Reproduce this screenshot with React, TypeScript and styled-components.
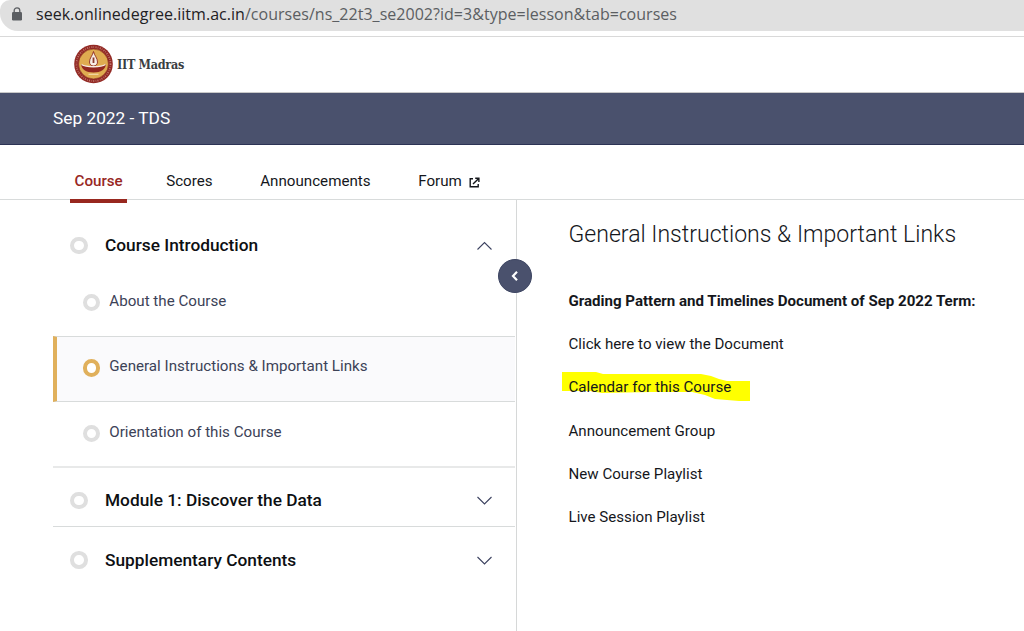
import React from 'react';
import styled, { createGlobalStyle } from 'styled-components';

const Global = createGlobalStyle`
  * { box-sizing: border-box; }
  body { margin: 0; background: #fff; overflow: hidden; font-family: Roboto, "Liberation Sans", sans-serif; }
`;

const Page = styled.div`
  width: 1024px;
  height: 631px;
  display: flex;
  flex-direction: column;
  overflow: hidden;
`;

const BrowserBar = styled.div`
  height: 37px;
  flex: none;
  border-bottom: 1px solid #d9d9d9;
`;

const AddressField = styled.div`
  height: 31px;
  background: #e0e0e0;
  border-radius: 10px 0 0 18px;
  display: flex;
  align-items: center;
  padding: 0 0 3px 11px;
  gap: 13px;
`;

const Url = styled.span`
  font: 400 16px/24px "Open Sans", "Noto Sans", sans-serif;
  letter-spacing: 0.03px;
  color: #5b5e62;
  white-space: nowrap;
  b { font-weight: 400; color: #1f2124; }
`;

const Header = styled.header`
  height: 56px;
  flex: none;
  display: flex;
  align-items: center;
  padding: 0 0 1px 74px;
  gap: 4px;
  border-bottom: 1px solid #c9c9c9;
`;

const Brand = styled.span`
  font: 700 12.5px/20px "DejaVu Serif Condensed", "DejaVu Serif", serif;
  letter-spacing: -0.3px;
  color: #3a3d42;
  white-space: nowrap;
  padding-top: 2px;
`;

const TitleBar = styled.div`
  height: 52px;
  flex: none;
  background: #4a516d;
  border-bottom: 1px solid #2c3354;
  color: #fff;
  padding-left: 53px;
  font-size: 17.3px;
  line-height: 50px;
`;

const Tabs = styled.nav`
  height: 55px;
  flex: none;
  display: flex;
  padding-left: 70px;
  border-bottom: 1px solid #d8dbdb;
`;

const Tab = styled.a<{ $active?: boolean; $gap: number }>`
  height: 58px;
  padding: 18px 4px 0 4.5px;
  margin-right: ${p => p.$gap}px;
  display: flex;
  gap: 7px;
  font-size: 15.15px;
  line-height: 37px;
  font-weight: ${p => (p.$active ? 500 : 400)};
  color: ${p => (p.$active ? '#98281f' : '#15171c')};
  border-bottom: ${p => (p.$active ? '4px solid #98281f' : 'none')};
  white-space: nowrap;
  svg { margin-top: 14px; }
`;

const Body = styled.main`
  flex: 1;
  display: flex;
`;

const Sidebar = styled.aside`
  width: 517px;
  flex: none;
  padding: 0 1px 0 53px;
  border-right: 1px solid #d6d8d8;
  position: relative;
`;

const ModuleRow = styled.div<{ $h: number; $top: number; $line?: boolean }>`
  height: ${p => p.$h}px;
  padding: ${p => p.$top}px 23px 0 17px;
  display: flex;
  align-items: flex-start;
  border-bottom: ${p => (p.$line ? '1px solid #d8dbdb' : 'none')};
  svg { margin-top: 8px; }
`;

const ModuleName = styled.span`
  flex: 1;
  margin-left: 17.5px;
  font-size: 17.3px;
  line-height: 24px;
  font-weight: 500;
  color: #0d0f12;
`;

const LessonRow = styled.div<{ $active?: boolean; $last?: boolean }>`
  height: 66px;
  display: flex;
  align-items: center;
  padding: 0 0 ${p => (p.$active ? 6 : 5)}px ${p => (p.$active ? 25.5 : 29.5)}px;
  gap: 9.3px;
  background: ${p => (p.$active ? '#fafafc' : '#fff')};
  border: solid #d8dbdb;
  border-width: ${p => (p.$active ? '1px 0' : '0')};
  border-left: ${p => (p.$active ? '4px solid #e0b05c' : 'none')};
  border-bottom: ${p => (p.$last ? '2px solid #e8e9e9' : '')};
`;

const LessonName = styled.span`
  font-size: 15.15px;
  line-height: 22px;
  color: #3c4257;
`;

const Ring = styled.span<{ $active?: boolean }>`
  width: 17.5px;
  height: 17.5px;
  flex: none;
  margin-top: 3.5px;
  border-radius: 50%;
  background: #fff;
  border: 4px solid ${p => (p.$active ? '#e0b05c' : '#dfdfdf')};
`;

const Collapse = styled.button`
  position: absolute;
  left: 498px;
  top: 59px;
  width: 34px;
  height: 34px;
  padding: 0 1px 1px 0;
  border: 1px solid #3d4562;
  border-radius: 50%;
  background: #4a516d;
  display: flex;
  align-items: center;
  justify-content: center;
`;

const Content = styled.section`
  flex: 1;
  padding: 18px 0 0 51.5px;
`;

const Heading = styled.h1`
  margin: 0 0 37px;
  font-size: 23.07px;
  line-height: 33px;
  font-weight: 300;
  color: #15171c;
  white-space: nowrap;
`;

const Para = styled.p<{ $bold?: boolean }>`
  margin: 0 0 19.2px;
  height: 24px;
  font-size: 15.1px;
  line-height: 26px;
  font-weight: ${p => (p.$bold ? 700 : 400)};
  letter-spacing: ${p => (p.$bold ? '-0.02px' : '0.01px')};
  color: #15171c;
  white-space: nowrap;
`;

const Marked = styled.span`
  position: relative;
  isolation: isolate;
  svg { position: absolute; z-index: -1; left: -7px; top: -7px; }
`;

const Lock = () => (
  <svg width="12" height="14" viewBox="0 0 12 14">
    <rect x="1" y="5" width="10" height="8.5" rx="1.2" fill="#5b5e62" />
    <path d="M3.2 6V3.6a2.8 2.8 0 0 1 5.6 0V6" fill="none" stroke="#5b5e62" strokeWidth="1.3" />
  </svg>
);

const Crest = () => (
  <svg width="39" height="40" viewBox="0 0 39 40">
    <circle cx="19.5" cy="20" r="19.3" fill="#932a25" />
    <circle cx="19.5" cy="20" r="17" fill="none" stroke="#c07a70" strokeWidth="1.8" strokeDasharray="1 1.2 .6 1.5" />
    <circle cx="19.5" cy="20" r="14.9" fill="#dfab50" stroke="#7d221d" strokeWidth=".5" />
    <path d="M19.5 7.5c.8 4 4 6.500 4 10.500 0 2.500-1.800 4-4 4s-4-1.500-4-4c0-4 3.200-6.500 4-10.500z" fill="#f8efe6" stroke="#8d2922" strokeWidth=".9" />
    <path d="M19.5 13.500v5.500" stroke="#8d3b30" strokeWidth="1.800" />
    <path d="M7 20c2.500 2 7.500 2.600 12.500 2.600S29.500 22 32 20c-.3 5-5 8.500-12.500 8.500S7.300 25 7 20z" fill="#922720" />
    <path d="M7.500 20.500c4.500 3 19.500 3 24 0" fill="none" stroke="#f8ece2" strokeWidth="1.300" />
    <path d="M14.500 30.300h10" stroke="#f3d9a8" strokeWidth="1.200" />
  </svg>
);

const External = () => (
  <svg width="11" height="11" viewBox="0 0 11 11" fill="none" stroke="#15171c" strokeWidth="1.4">
    <path d="M4 1.700H1.200v8.100h8V7" />
    <path d="M6.200 1.200h3.700v3.700M9.700 1.400L4 7" />
  </svg>
);

const Chevron = ({ up }: { up?: boolean }) => (
  <svg width="15" height="10" viewBox="0 0 15 10" fill="none" stroke="#3c4260" strokeWidth="1.1">
    <path d={up ? 'M.5 8.500l7-7 7 7' : 'M.5 1l7 7 7-7'} />
  </svg>
);

export default function App() {
  return (
    <>
      <Global />
      <Page>
        <BrowserBar>
          <AddressField>
            <Lock />
            <Url><b>seek.onlinedegree.iitm.ac.in</b>/courses/ns_22t3_se2002?id=3&amp;type=lesson&amp;tab=courses</Url>
          </AddressField>
        </BrowserBar>
        <Header>
          <Crest />
          <Brand>IIT Madras</Brand>
        </Header>
        <TitleBar>Sep 2022 - TDS</TitleBar>
        <Tabs>
          <Tab $active $gap={35}>Course</Tab>
          <Tab $gap={39.2}>Scores</Tab>
          <Tab $gap={39.2}>Announcements</Tab>
          <Tab $gap={0}>Forum <External /></Tab>
        </Tabs>
        <Body>
          <Sidebar>
            <ModuleRow $h={70} $top={33}><Ring /><ModuleName>Course Introduction</ModuleName><Chevron up /></ModuleRow>
            <LessonRow><Ring /><LessonName>About the Course</LessonName></LessonRow>
            <LessonRow $active><Ring $active /><LessonName>General Instructions &amp; Important Links</LessonName></LessonRow>
            <LessonRow $last><Ring /><LessonName>Orientation of this Course</LessonName></LessonRow>
            <ModuleRow $h={59} $top={20} $line><Ring /><ModuleName>Module 1: Discover the Data</ModuleName><Chevron /></ModuleRow>
            <ModuleRow $h={70} $top={20.5}><Ring /><ModuleName>Supplementary Contents</ModuleName><Chevron /></ModuleRow>
            <Collapse>
              <svg width="8" height="10" viewBox="0 0 8 10" fill="none" stroke="#fff" strokeWidth="2.2"><path d="M6 .8L2 5l4 4.200" /></svg>
            </Collapse>
          </Sidebar>
          <Content>
            <Heading>General Instructions &amp; Important Links</Heading>
            <Para $bold>Grading Pattern and Timelines Document of Sep 2022 Term:</Para>
            <Para>Click here to view the Document</Para>
            <Para>
              <Marked>
                <svg width="188" height="31" viewBox="0 0 188 31">
                  <path d="M0 1h34l7 2h98l10 2 8 3 8 2h23v20h-11l-24-2-10-4-13-3H90l-50 1-12-2H0z" fill="#ff0" />
                </svg>
                Calendar for this Course
              </Marked>
            </Para>
            <Para>Announcement Group</Para>
            <Para>New Course Playlist</Para>
            <Para>Live Session Playlist</Para>
          </Content>
        </Body>
      </Page>
    </>
  );
}
